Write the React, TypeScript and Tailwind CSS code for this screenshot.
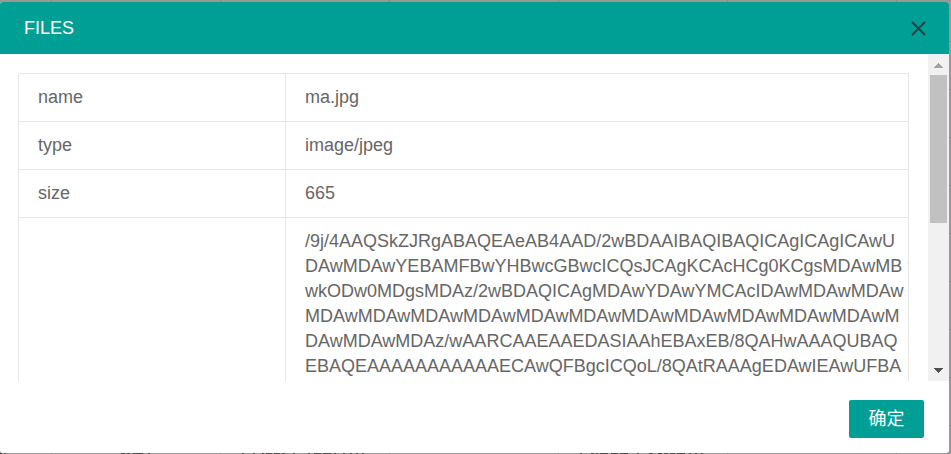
import React from "react";

const lines = [
  "/9j/4AAQSkZJRgABAQEAeAB4AAD/2wBDAAIBAQIBAQICAgICAgICAwU",
  "DAwMDAwYEBAMFBwYHBwcGBwcICQsJCAgKCAcHCg0KCgsMDAwMB",
  "wkODw0MDgsMDAz/2wBDAQICAgMDAwYDAwYMCAcIDAwMDAwMDAw",
  "MDAwMDAwMDAwMDAwMDAwMDAwMDAwMDAwMDAwMDAwMDAwM",
  "DAwMDAwMDAz/wAARCAAEAAEDASIAAhEBAxEB/8QAHwAAAQUBAQ",
  "EBAQEAAAAAAAAAAAECAwQFBgcICQoL/8QAtRAAAgEDAwIEAwUFBA",
];

const rows = [
  { key: "name", value: "ma.jpg" },
  { key: "type", value: "image/jpeg" },
  { key: "size", value: "665" },
];

const cell = "border border-[#e6e6e6] px-[19px] py-[11px] align-middle";

// The dimmed page behind the dialog: grid lines and the tops of a clipped text row.
function Backdrop() {
  return (
    <svg className="absolute inset-0 h-full w-full" aria-hidden="true" shapeRendering="crispEdges">
      <defs>
        <pattern id="grid" x="51" y="41" width="169" height="48" patternUnits="userSpaceOnUse">
          <path d="M0 0h169v1H0zM0 0h1v48H0z" fill="#868688" />
        </pattern>
      </defs>
      <rect width="100%" height="100%" fill="#999799" />
      <rect width="100%" height="100%" fill="url(#grid)" />
      <path
        d="M0 453.5h2m2 0h2M121 453.5h4m2 0h3m3 0h10m5 0h2M242 453.5h2m9 0h2m7 0h2m2 0h6m2 0h6m2 0h3m8 0h2m13 0h2m4 0h7m2 0h8m3 0h2m7 0h2m5 0h2m4 0h2m4 0h2M580 453.5h2m9 0h3m2 0h2m2 0h8m3 0h7m2 0h8m9 0h2m10 0h4m5 0h4m2 0h4m2 0h5m2 0h8m4 0h2m4 0h2m4 0h2"
        stroke="#4d484b"
      />
    </svg>
  );
}

function ScrollBar() {
  return (
    <div className="flex w-[21px] shrink-0 flex-col items-center bg-[#f1f1f1]" aria-hidden="true">
      <div className="flex h-[21px] shrink-0 items-center justify-center pt-px">
        <svg width="9" height="5" viewBox="0 0 9 5" shapeRendering="crispEdges">
          <path d="M4 0h1v1h1v1h1v1h1v1h1v1H0V4h1V3h1V2h1V1h1z" fill="#a3a3a3" />
        </svg>
      </div>
      <div className="w-[17px] grow">
        <div className="h-[148px] bg-[#c1c1c1]" />
      </div>
      <div className="flex h-[21px] shrink-0 items-center justify-center">
        <svg width="9" height="5" viewBox="0 0 9 5" shapeRendering="crispEdges">
          <path d="M0 0h9v1H8v1H7v1H6v1H5v1H4V4H3V3H2V2H1V1H0z" fill="#505050" />
        </svg>
      </div>
    </div>
  );
}

export default function App() {
  return (
    <div className="relative flex h-screen flex-col bg-[#999999] pt-[2px] pr-[2px] pb-px font-['Liberation_Sans','Noto_Sans_CJK_SC',sans-serif] text-lg leading-[25px] text-[#666666]">
      <Backdrop />
      <div role="dialog" aria-labelledby="dialog-title" className="relative flex min-h-0 grow flex-col overflow-hidden rounded-[3px] bg-white">
        <header className="flex h-[52px] shrink-0 items-center justify-between bg-[#009f95] pr-[22px] pl-6">
          <h2 id="dialog-title" className="text-white">FILES</h2>
          <button type="button" aria-label="Close" className="pt-px text-[#2e3c47]">
            <svg width="17" height="17" viewBox="0 0 17 17" fill="none" stroke="currentColor" strokeWidth="2">
              <path d="M2 2l13 13M15 2L2 15" />
            </svg>
          </button>
        </header>
        <div className="flex min-h-0 grow">
          <div className="min-w-0 grow overflow-hidden pt-[19px] pr-[19px] pl-[18px]">
            <table className="w-full table-fixed border-collapse">
              <colgroup>
                <col className="w-[30%]" />
                <col />
              </colgroup>
              <tbody>
                {rows.map((row) => (
                  <tr key={row.key}>
                    <td className={cell}>{row.key}</td>
                    <td className={cell}>{row.value}</td>
                  </tr>
                ))}
                <tr>
                  <td className={cell} />
                  <td className={cell}>
                    {lines.map((line) => (
                      <div key={line} className="whitespace-nowrap">{line}</div>
                    ))}
                  </td>
                </tr>
              </tbody>
            </table>
          </div>
          <ScrollBar />
        </div>
        <footer className="flex h-[72px] shrink-0 items-start justify-end pt-[19px] pr-[25px]">
          <button type="button" className="h-[38px] min-w-[75px] rounded-[2px] bg-[#009f95] px-[19px] text-white">确定</button>
        </footer>
      </div>
    </div>
  );
}
